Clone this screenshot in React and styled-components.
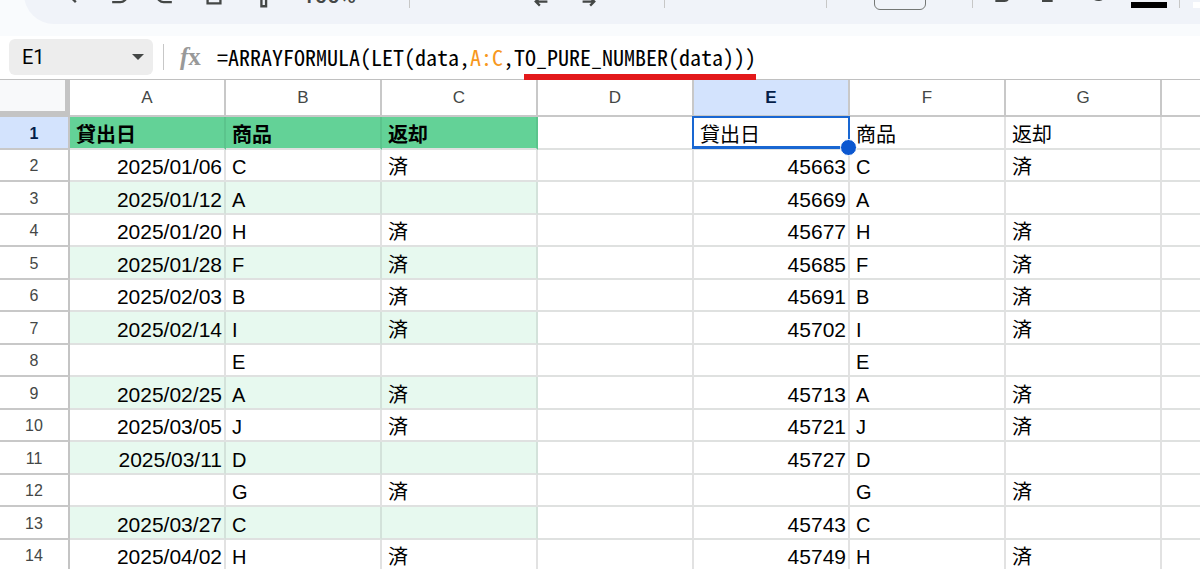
import React from "react"
import styled, { createGlobalStyle } from "styled-components"
import { MdFormatBold, MdFormatItalic, MdStrikethroughS, MdArrowDropDown } from "react-icons/md"

const HEADER_ROW = { date: "貸出日", number: "貸出日", item: "商品", returned: "返却" }

const records = [
    HEADER_ROW,
    { date: "2025/01/06", number: "45663", item: "C", returned: "済" },
    { date: "2025/01/12", number: "45669", item: "A", returned: "" },
    { date: "2025/01/20", number: "45677", item: "H", returned: "済" },
    { date: "2025/01/28", number: "45685", item: "F", returned: "済" },
    { date: "2025/02/03", number: "45691", item: "B", returned: "済" },
    { date: "2025/02/14", number: "45702", item: "I", returned: "済" },
    { date: "", number: "", item: "E", returned: "" },
    { date: "2025/02/25", number: "45713", item: "A", returned: "済" },
    { date: "2025/03/05", number: "45721", item: "J", returned: "済" },
    { date: "2025/03/11", number: "45727", item: "D", returned: "" },
    { date: "", number: "", item: "G", returned: "済" },
    { date: "2025/03/27", number: "45743", item: "C", returned: "" },
    { date: "2025/04/02", number: "45749", item: "H", returned: "済" },
]

const columns = ["A", "B", "C", "D", "E", "F", "G"]

const GlobalStyle = createGlobalStyle`
    * {
        box-sizing: border-box;
    }

    body {
        margin: 0;
        background: #fff;
        overflow: hidden;
        font-family: "Liberation Sans", "Noto Sans CJK JP", sans-serif;
    }

    button, input {
        font: inherit;
        color: inherit;
        border: 0;
        padding: 0;
        background: none;
    }
`

const Page = styled.div`
    height: 100vh;
    overflow: hidden;
`

const ToolbarArea = styled.header`
    height: 36px;
    padding-left: 24px;
    overflow: hidden;
    background: #f9fbfd;
    display: flex;
    align-items: flex-start;
`

const Toolbar = styled.div`
    flex: 1;
    min-width: 0;
    height: 60px;
    margin-top: -36px;
    padding-left: 22px;
    display: flex;
    align-items: center;
    background: #f0f3f9;
    border-radius: 32px 0 0 32px;
    color: #444746;
`

const ToolButton = styled.button`
    flex: none;
    width: ${props => props.$width || 48}px;
    height: 44px;
    display: flex;
    align-items: center;
    justify-content: center;
`

const ZoomButton = styled(ToolButton)`
    padding-top: 2px;
    font: 500 22px Roboto, sans-serif;
`

const Divider = styled.span`
    flex: none;
    width: 1px;
    height: 28px;
    margin-left: ${props => props.$before || 0}px;
    margin-right: ${props => props.$after || 0}px;
    background: #c7c7c7;
`

const SizeInput = styled.input`
    && {
        flex: none;
        width: 52px;
        height: 32px;
        border: 1px solid #747775;
        border-radius: 6px;
        font-size: 18px;
        text-align: center;
    }
`

const FormulaBar = styled.div`
    height: 44px;
    padding: 3px 9px 4px;
    display: flex;
    align-items: center;
    border-bottom: 1px solid #c0c0c0;
`

const NameBox = styled.div`
    width: 144px;
    height: 36px;
    padding: 0 9px 0 13px;
    display: flex;
    align-items: center;
    border-radius: 6px;
    background: #ededed;
    font-family: Roboto, sans-serif;
    font-size: 20px;

    input {
        flex: 1;
        min-width: 0;
    }
`

const NameBoxDivider = styled(Divider)`
    height: 26px;
`

const FunctionLabel = styled.span`
    width: 37px;
    font: bold 25px/32px "Liberation Serif", serif;
    color: #999;
`

const Formula = styled.div`
    font: 22px/32px "Noto Sans Mono CJK JP", "Liberation Mono", monospace;
    padding-bottom: 2px;
    white-space: pre;
    color: #000;
`

const RangeRef = styled.span`
    color: #f7981d;
`

// Red pen line drawn under the function name
const Marked = styled.span`
    position: relative;

    &::after {
        content: "";
        position: absolute;
        z-index: 1;
        left: 10px;
        right: 0;
        bottom: -8px;
        height: 6px;
        background: #e3191b;
    }
`

const Sheet = styled.table`
    width: 100%;
    table-layout: fixed;
    border-collapse: separate;
    border-spacing: 0;
`

const HeadCol = styled.col`
    width: 70px;
`

const Col = styled.col`
    width: 156px;
`

const Corner = styled.td`
    padding: 0;
    background: #f8f9fa;
    border-right: 5px solid #c4c4c4;
    border-bottom: 6px solid #c4c4c4;
`

const ColumnHead = styled.th`
    height: 37px;
    padding: 0;
    font-size: 17px;
    font-weight: ${props => props.$active ? 700 : 400};
    color: ${props => props.$active ? "#041e49" : "#444746"};
    background: ${props => props.$active ? "#d3e3fd" : "#fff"};
    border-right: 2px solid #c8c8c8;
    border-bottom: 2px solid #c8c8c8;

    &:last-child {
        border-right: 0;
    }
`

const Row = styled.tr`
    height: 32px;

    &:nth-child(odd) {
        height: 33px;
    }
`

const RowHead = styled.th`
    padding: 2px 0 0;
    font-size: 16px;
    font-weight: ${props => props.$active ? 700 : 400};
    color: ${props => props.$active ? "#041e49" : "#444746"};
    background: ${props => props.$active ? "#d3e3fd" : "#fff"};
    border-right: 2px solid #c4c4c4;
    border-bottom: 2px solid #c8c8c8;
`

const fills = {
    title: { background: "#63d297", line: "#5bc48c" },
    band: { background: "#e7f9ef", line: "#d3e2da" },
    none: { background: "#fff", line: "#e2e2e2" },
}

const Cell = styled.td`
    position: relative;
    padding: 4px 2px 0 6px;
    font-size: ${props => props.$number ? 21 : 20}px;
    line-height: 26px;
    white-space: nowrap;
    color: #000;
    text-align: ${props => props.$number ? "right" : "left"};
    font-weight: ${props => props.$fill === "title" ? 700 : 400};
    background: ${props => fills[props.$fill || "none"].background};
    border-right: 2px solid ${props => fills[props.$fill || "none"].line};
    border-bottom: 2px solid #dfe1e0;

    &:last-child {
        border-right: 0;
    }
`

// Selection frame lies over the cell and its grid lines
const Selection = styled.span`
    position: absolute;
    z-index: 1;
    inset: -1px -2px -1px -2px;
    border: 2px solid #1967d2;
    border-width: 2px 2px 3px;
    pointer-events: none;

    &::after {
        content: "";
        position: absolute;
        right: -9px;
        bottom: -10px;
        width: 15px;
        height: 15px;
        border: 1px solid #fff;
        border-radius: 50%;
        background: #0b57d0;
    }
`

const Icon = ({ children }) => (
    <svg width="28" height="28" viewBox="0 0 24 24" fill="none" stroke="currentColor" strokeWidth="2" aria-hidden="true">
        {children}
    </svg>
)

const ColorBar = ({ color }) => (
    <svg width="36" height="28" viewBox="0 0 36 28" aria-hidden="true">
        <rect y="22" width="36" height="6" fill={color} />
    </svg>
)

class SheetToolbar extends React.Component {
    render() {
        return (
            <ToolbarArea>
                <Toolbar>
                    <ToolButton aria-label="Search"><Icon><circle cx="8" cy="9" r="5" /><path d="M11 13l6 6" /></Icon></ToolButton>
                    <ToolButton aria-label="Undo"><Icon><path d="M8 4L4 8l4 4M4 8h10a5 5 0 0 1 0 11H7" /></Icon></ToolButton>
                    <ToolButton aria-label="Redo"><Icon><path d="M16 4l4 4-4 4M20 8H10a5 5 0 0 0 0 11h7" /></Icon></ToolButton>
                    <ToolButton aria-label="Print"><Icon><path d="M6.500 14h11v6h-11z" /></Icon></ToolButton>
                    <ToolButton aria-label="Paint format"><Icon><path d="M11.500 16h4v6.500h-4z" /></Icon></ToolButton>
                    <ZoomButton $width={86}>100%</ZoomButton>
                    <Divider $before={37} $after={107} />
                    <ToolButton aria-label="Decrease decimal places"><Icon><path d="M17.500 18.500H8M11 15l-3.500 3.500L11 22" /></Icon></ToolButton>
                    <ToolButton aria-label="Increase decimal places"><Icon><path d="M6.500 18.500H16M13 15l3.500 3.500L13 22" /></Icon></ToolButton>
                    <Divider $before={51} $after={52} />
                    <ToolButton aria-label="Font"><MdArrowDropDown size={40} /></ToolButton>
                    <Divider $before={61} $after={47} />
                    <SizeInput aria-label="Font size" defaultValue="10" />
                    <Divider $before={46} $after={5} />
                    <ToolButton aria-label="Bold"><MdFormatBold size={32} /></ToolButton>
                    <ToolButton aria-label="Italic"><MdFormatItalic size={32} /></ToolButton>
                    <ToolButton aria-label="Strikethrough"><MdStrikethroughS size={28} /></ToolButton>
                    <ToolButton aria-label="Text color" $width={54}><ColorBar color="#000" /></ToolButton>
                    <Divider $before={3} $after={4} />
                    <ToolButton aria-label="Fill color" $width={54}><ColorBar color="#fff" /></ToolButton>
                </Toolbar>
            </ToolbarArea>
        )
    }
}

class Spreadsheet extends React.Component {
    getFill = index => {
        if(index === 0) {
            return "title"
        }
        return index % 2 === 0 ? "band" : "none"
    }

    renderRow = (record, index) => {
        const isTitle = index === 0
        const fill = this.getFill(index)

        return (
            <Row key={index}>
                <RowHead scope="row" $active={isTitle}>{index + 1}</RowHead>
                <Cell $fill={fill} $number={!isTitle}>{record.date}</Cell>
                <Cell $fill={fill}>{record.item}</Cell>
                <Cell $fill={fill}>{record.returned}</Cell>
                <Cell />
                <Cell $number={!isTitle}>{record.number}{isTitle && <Selection />}</Cell>
                <Cell>{record.item}</Cell>
                <Cell>{record.returned}</Cell>
                <Cell />
            </Row>
        )
    }

    render() {
        return (
            <Sheet>
                <colgroup>
                    <HeadCol />
                    {columns.map(name => <Col key={name} />)}
                    <col />
                </colgroup>
                <thead>
                    <tr>
                        <Corner />
                        {columns.map(name => <ColumnHead key={name} scope="col" $active={name === "E"}>{name}</ColumnHead>)}
                        <ColumnHead as="td" />
                    </tr>
                </thead>
                <tbody>{records.map(this.renderRow)}</tbody>
            </Sheet>
        )
    }
}

const App = () => (
    <Page>
        <GlobalStyle />
        <SheetToolbar />
        <FormulaBar>
            <NameBox>
                <input aria-label="Name box" defaultValue="E1" />
                <svg width="12" height="6" viewBox="0 0 12 6" aria-hidden="true"><path d="M0 0h12L6 6z" fill="#444746" /></svg>
            </NameBox>
            <NameBoxDivider $before={10} $after={16} />
            <FunctionLabel><i>f</i>x</FunctionLabel>
            <Formula>
                =ARRAYFORMULA(LET(data,<RangeRef>A:C</RangeRef>,<Marked>TO_PURE_NUMBER(data)))</Marked>
            </Formula>
        </FormulaBar>
        <Spreadsheet />
    </Page>
)

export default App
